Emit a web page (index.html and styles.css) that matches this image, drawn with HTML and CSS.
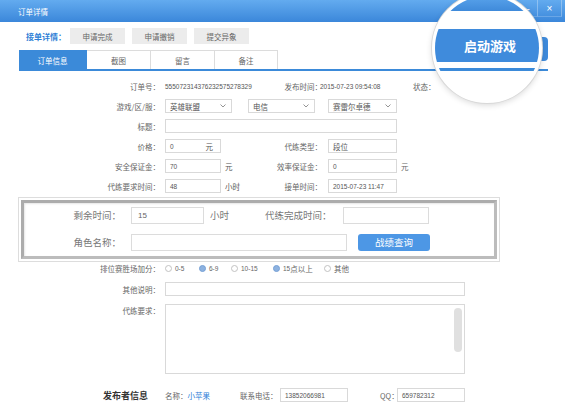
FILE: index.html
```html
<!DOCTYPE html>
<html>
<head>
    <meta charset="utf-8">
    <link rel="stylesheet" href="styles.css">
</head>
<body>
    <!-- window title -->
    <div class="titlebar">
        <span>订单详情</span>
        <div class="win-ctrl">
            <span class="win-min">&#8211;</span>
            <span class="win-close">&#215;</span>
        </div>
    </div>

    <!-- actions -->
    <div class="toolbar">
        <span class="toolbar-title">接单详情：</span>
        <span class="tool-btn">申请完成</span>
        <span class="tool-btn">申请撤销</span>
        <span class="tool-btn">提交异象</span>
    </div>

    <div class="tabs">
        <span class="tab active">订单信息</span>
        <span class="tab w64">截图</span>
        <span class="tab w64">留言</span>
        <span class="tab w63">备注</span>
    </div>

    <!-- order fields -->
    <div class="form">
        <div class="row">
            <span class="lbl">订单号：</span>
            <span class="cell num">555072314376232575278329</span>
            <span class="lbl2">发布时间：</span>
            <span class="cell2 num pub-time">2015-07-23 09:54:08</span>
            <span>状态：</span>
        </div>
        <div class="row">
            <span class="lbl">游戏/区/服：</span>
            <span class="select s1">英雄联盟<svg width="6" height="4" viewBox="0 0 6 4"><polyline points="0.5,0.5 3,3 5.5,0.5" fill="none" stroke="#888" stroke-width="0.9"/></svg></span>
            <span class="select s2">电信<svg width="6" height="4" viewBox="0 0 6 4"><polyline points="0.5,0.5 3,3 5.5,0.5" fill="none" stroke="#888" stroke-width="0.9"/></svg></span>
            <span class="select s3">赛雷尔卓德<svg width="6" height="4" viewBox="0 0 6 4"><polyline points="0.5,0.5 3,3 5.5,0.5" fill="none" stroke="#888" stroke-width="0.9"/></svg></span>
        </div>
        <div class="row">
            <span class="lbl">标题：</span>
            <span class="input title-input"></span>
        </div>
        <div class="row">
            <span class="lbl">价格：</span>
            <span class="cell"><span class="input short price"><span class="num">0</span><span>元</span></span></span>
            <span class="lbl2">代练类型：</span>
            <span class="input long">段位</span>
        </div>
        <div class="row">
            <span class="lbl">安全保证金：</span>
            <span class="cell"><span class="input short num">70</span><span class="unit">元</span></span>
            <span class="lbl2">效率保证金：</span>
            <span class="input long num">0</span><span class="unit">元</span>
        </div>
        <div class="row">
            <span class="lbl">代练要求时间：</span>
            <span class="cell"><span class="input short num">48</span><span class="unit">小时</span></span>
            <span class="lbl2">接单时间：</span>
            <span class="input long num">2015-07-23 11:47</span>
        </div>

        <!-- highlighted block -->
        <div class="focus-box">
            <div class="focus-inner">
                <div class="frow">
                    <span class="flbl">剩余时间：</span>
                    <span class="fcell"><span class="finput left-time num">15</span><span class="funit">小时</span></span>
                    <span>代练完成时间：</span>
                    <span class="finput end-time"></span>
                </div>
                <div class="frow">
                    <span class="flbl">角色名称：</span>
                    <span class="finput role-name"></span>
                    <span class="query-btn">战绩查询</span>
                </div>
            </div>
        </div>

        <div class="row radio-row">
            <span class="lbl">排位赛胜场加分：</span>
            <span class="radio r1"><i></i><span class="num">0-5</span></span>
            <span class="radio r2"><i class="on"></i><span class="num">6-9</span></span>
            <span class="radio r3"><i></i><span class="num">10-15</span></span>
            <span class="radio r4"><i class="on"></i><span class="num">15</span>点以上</span>
            <span class="radio"><i></i>其他</span>
        </div>
        <div class="row other-row">
            <span class="lbl">其他说明：</span>
            <span class="input wide"></span>
        </div>
        <div class="row req-row">
            <span class="lbl">代练要求：</span>
            <div class="textarea"><span class="thumb"></span></div>
        </div>

        <div class="row publisher">
            <span class="pub-title">发布者信息</span>
            <span class="pub-name">名称：<span class="blue">小苹果</span></span>
            <span class="pub-tel">联系电话：</span>
            <span class="input phone num">13852066981</span>
            <span class="pub-qq">QQ：</span>
            <span class="input phone num">659782312</span>
        </div>
    </div>

    <!-- zoomed launch button -->
    <div class="launch-tail"></div>
    <div class="loupe">
        <div class="loupe-bar"></div>
        <div class="loupe-gap"></div>
        <div class="loupe-btn">启动游戏</div>
        <div class="loupe-gap2"></div>
        <div class="loupe-line"></div>
    </div>
</body>
</html>
```

FILE: styles.css
```css
* {
    box-sizing: border-box;
}

body {
    margin: 0;
    width: 565px;
    height: 413px;
    overflow: hidden;
    position: relative;
    background: #fff;
    font-family: "Noto Sans CJK SC", "Liberation Sans", sans-serif;
    font-size: 7.5px;
    color: #666;
}

.num {
    font-family: "Liberation Sans", sans-serif;
    font-size: 6.5px;
}

/* Title bar */
.titlebar {
    height: 22px;
    display: flex;
    align-items: center;
    padding-left: 18px;
    background: linear-gradient(#63abef, #3b87da);
    color: #fff;
}

.win-ctrl {
    margin-left: auto;
    margin-right: 3px;
    align-self: flex-start;
    display: flex;
    height: 17px;
}

.win-ctrl span {
    display: flex;
    align-items: center;
    justify-content: center;
    border-left: 1px solid rgba(255,255,255,0.3);
    border-bottom: 1px solid rgba(255,255,255,0.2);
    font-family: "Liberation Sans", sans-serif;
    font-size: 10px;
}

.win-min { width: 22px; }
.win-close { width: 25px; border-right: 1px solid rgba(255,255,255,0.3); }

/* Toolbar */
.toolbar {
    display: flex;
    align-items: center;
    padding: 6px 0 0 26px;
}

.toolbar-title {
    color: #2f7fd6;
    font-weight: bold;
    font-size: 8px;
    width: 44px;
}

.tool-btn {
    width: 55px;
    height: 16px;
    margin-right: 7px;
    display: flex;
    align-items: center;
    justify-content: center;
    background: #ececec;
    color: #666;
}

/* Tabs */
.tabs {
    display: flex;
    margin: 6px 0 0 19px;
    width: 529px;
    border-bottom: 2px solid #3b8ad9;
}

.tab {
    height: 19px;
    display: flex;
    align-items: center;
    justify-content: center;
    border: 1px solid #dcdcdc;
    border-bottom: none;
    border-left: none;
}

.tab.active {
    width: 68px;
    background: #3b8ad9;
    border-color: #3b8ad9;
    color: #fff;
}

.w64 { width: 64px; }
.w63 { width: 63px; }

/* Form rows */
.form {
    padding-top: 5px;
}

.row {
    display: flex;
    align-items: center;
    height: 20px;
}

.lbl {
    width: 160px;
    text-align: right;
}

.cell {
    width: 93px;
    margin-left: 5px;
    display: flex;
    align-items: center;
    color: #555;
}

.lbl2 {
    width: 64px;
    text-align: right;
}

.cell2 {
    width: 93px;
    color: #555;
}

.pub-time {
    margin-left: -2px;
}

.input,
.select {
    height: 14px;
    border: 1px solid #d9d9d9;
    display: flex;
    align-items: center;
    padding: 0 4px;
    color: #555;
    background: #fff;
}

.select {
    justify-content: space-between;
    padding-right: 5px;
}

.s1 { width: 67px; margin-left: 5px; }
.s2 { width: 67px; margin-left: 16px; }
.s3 { width: 69px; margin-left: 13px; }

.title-input { width: 232px; margin-left: 5px; }
.short { width: 56px; }
.long { width: 69px; margin-left: 6px; }
.price { justify-content: space-between; padding-right: 7px; }

.unit {
    margin-left: 4px;
}

/* Highlighted block */
.focus-box {
    margin: 1px 0 0 18px;
    width: 482px;
    height: 65px;
    border: 1px solid #ddd;
    padding: 2px;
}

.focus-inner {
    height: 100%;
    border: 3px solid #bcbcbc;
    border-top-color: #acacac;
    border-left-color: #acacac;
    box-shadow: inset 1px 1px 2px rgba(0,0,0,0.1);
    font-size: 9.5px;
    color: #777;
}

.frow {
    display: flex;
    align-items: center;
    height: 24px;
    margin-bottom: 3px;
}

.flbl {
    width: 97px;
    text-align: right;
}

.fcell {
    width: 134px;
    margin-left: 10px;
    display: flex;
    align-items: center;
}

.finput {
    height: 17px;
    border: 1px solid #dcdcdc;
    display: flex;
    align-items: center;
    padding-left: 6px;
    color: #666;
}

.finput.num { font-size: 8px; }

.left-time { width: 73px; }
.end-time { width: 86px; margin-left: 11px; }
.role-name { width: 216px; margin-left: 10px; }

.funit {
    margin-left: 6px;
}

.query-btn {
    width: 72px;
    height: 17px;
    margin-left: 11px;
    border-radius: 3px;
    background: #4d97e5;
    color: #fff;
    display: flex;
    align-items: center;
    justify-content: center;
}

/* Radios */
.radio-row {
    height: 12px;
}

.radio {
    display: flex;
    align-items: center;
}

.radio i {
    width: 7px;
    height: 7px;
    border-radius: 50%;
    border: 1px solid #c2c2c2;
    margin-right: 3px;
}

.radio i.on {
    background: #8db2e0;
    border-color: #76a0d5;
}

.r1 { width: 34px; margin-left: 5px; }
.r2 { width: 32px; }
.r3 { width: 42px; }
.r4 { width: 51px; }

.other-row {
    margin-top: 5px;
}

.wide { width: 300px; margin-left: 5px; }

.req-row {
    margin-top: 5px;
    height: 70px;
    align-items: flex-start;
}

.req-row .lbl {
    padding-top: 1px;
}

.textarea {
    width: 300px;
    height: 70px;
    margin-left: 5px;
    border: 1px solid #d9d9d9;
    display: flex;
    justify-content: flex-end;
    padding: 3px 2px 0 0;
}

.thumb {
    width: 8px;
    height: 44px;
    border-radius: 4px;
    background: #e0e0e0;
}

/* Publisher */
.publisher {
    margin-top: 14px;
    height: 14px;
}

.pub-title {
    width: 148px;
    text-align: right;
    font-size: 9px;
    font-weight: bold;
    color: #333;
}

.pub-name {
    margin-left: 17px;
    width: 75px;
}

.blue {
    color: #2f80d8;
}

.pub-tel {
    width: 40px;
}

.phone {
    width: 68px;
}

.pub-qq {
    margin-left: 32px;
    width: 17px;
}

/* Loupe over the launch button */
.launch-tail {
    position: absolute;
    left: 500px;
    top: 37px;
    width: 48px;
    height: 24px;
    border-radius: 4px;
    background: #3f8bdc;
}

.loupe {
    position: absolute;
    left: 432px;
    top: -7px;
    width: 110px;
    height: 110px;
    border-radius: 50%;
    overflow: hidden;
    background: #fff;
    border: 3px solid #fff;
    box-shadow: 0 0 0 1px #d8d8d8, 0 2px 6px rgba(0,0,0,0.16);
    display: flex;
    flex-direction: column;
}

.loupe-bar {
    height: 15px;
    flex: none;
    background: linear-gradient(#5aa4ec, #3f8ada);
}

.loupe-gap {
    height: 18px;
    flex: none;
}

.loupe-btn {
    height: 33px;
    flex: none;
    background: #3f8bdc;
    color: #fff;
    font-size: 13px;
    font-weight: bold;
    display: flex;
    align-items: center;
    justify-content: center;
    padding-left: 6px;
}

.loupe-gap2 {
    height: 6px;
    flex: none;
}

.loupe-line {
    height: 3px;
    flex: none;
    background: #3b8ad9;
}
```
